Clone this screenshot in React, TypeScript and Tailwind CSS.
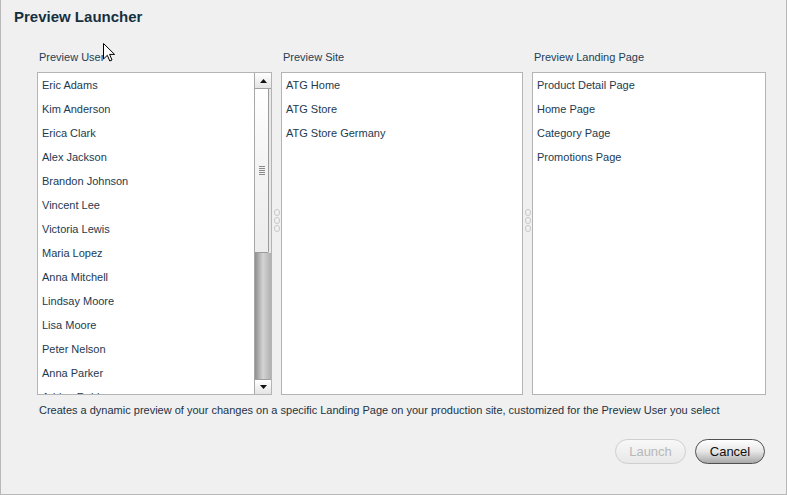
import React from 'react';

const users = [
  'Eric Adams',
  'Kim Anderson',
  'Erica Clark',
  'Alex Jackson',
  'Brandon Johnson',
  'Vincent Lee',
  'Victoria Lewis',
  'Maria Lopez',
  'Anna Mitchell',
  'Lindsay Moore',
  'Lisa Moore',
  'Peter Nelson',
  'Anna Parker',
  'Adrian Robinson',
];

const sites = ['ATG Home', 'ATG Store', 'ATG Store Germany'];

const pages = ['Product Detail Page', 'Home Page', 'Category Page', 'Promotions Page'];

function Items({ items }: { items: string[] }) {
  return (
    <ul className="pt-[4px]">
      {items.map((item) => (
        <li key={item} className="h-[24px] leading-[16px] pl-[4px] text-[11px] text-[#1d3a50] whitespace-nowrap">
          {item}
        </li>
      ))}
    </ul>
  );
}

function Splitter() {
  return (
    <div className="w-[9px] flex flex-col items-center justify-center gap-[1px] pt-[4px]">
      <span className="w-[6px] h-[7px] rounded-full border border-[#c8c8c8]" />
      <span className="w-[6px] h-[7px] rounded-full border border-[#c8c8c8]" />
      <span className="w-[6px] h-[7px] rounded-full border border-[#c8c8c8]" />
    </div>
  );
}

function Scrollbar() {
  return (
    <div className="w-[17px] flex flex-col border-l border-[#a8a8a8] bg-[#e8e8e8]">
      <div className="h-[16px] flex items-center justify-center bg-gradient-to-b from-white to-[#e4e4e4] border-b border-[#a0a0a0]">
        <svg width="7" height="4" viewBox="0 0 7 4"><path d="M3.5 0L7 4H0z" fill="#111" /></svg>
      </div>
      <div className="h-[164px] mr-[2px] flex items-center justify-center rounded-br-[2px] bg-gradient-to-b from-white via-[#f3f3f3] to-[#ececec] border-r border-b border-[#9a9a9a]">
        <div className="flex flex-col gap-[1px]">
          <span className="w-[6px] h-px bg-[#8a8a8a]" />
          <span className="w-[6px] h-px bg-[#8a8a8a]" />
          <span className="w-[6px] h-px bg-[#8a8a8a]" />
          <span className="w-[6px] h-px bg-[#8a8a8a]" />
          <span className="w-[6px] h-px bg-[#8a8a8a]" />
        </div>
      </div>
      <div className="flex-1 bg-gradient-to-r from-[#8f8f8f] via-[#d4d4d4] to-[#b0b0b0]" />
      <div className="h-[15px] flex items-center justify-center bg-gradient-to-b from-white to-[#e4e4e4] border-t border-[#a0a0a0]">
        <svg width="7" height="4" viewBox="0 0 7 4"><path d="M0 0H7L3.5 4z" fill="#111" /></svg>
      </div>
    </div>
  );
}

function Column({ label, width, children }: { label: string; width: string; children: React.ReactNode }) {
  return (
    <div className={`flex flex-col ${width}`}>
      <div className="h-[30px] pl-[2px] pt-[8px] text-[11px] leading-[14px] text-[#243e55]">{label}</div>
      <div className="h-[323px] flex border border-[#b4b4b4] bg-white overflow-hidden">{children}</div>
    </div>
  );
}

export default function App() {
  return (
    <div
      className="relative w-[787px] h-[495px] bg-[#f0f0f0] border-l border-r border-b border-[#b8b8b8] overflow-hidden"
      style={{ fontFamily: '"Liberation Sans", Arial, sans-serif' }}
    >
      <h1 className="pl-[13px] pt-[8px] h-[42px] text-[15px] leading-[18px] font-bold text-[#17303f]">Preview Launcher</h1>

      <div className="flex pl-[36px]">
        <Column label="Preview User" width="w-[235px]">
          <div className="flex-1 overflow-hidden">
            <Items items={users} />
          </div>
          <Scrollbar />
        </Column>
        <Splitter />
        <Column label="Preview Site" width="w-[242px]">
          <div className="flex-1">
            <Items items={sites} />
          </div>
        </Column>
        <Splitter />
        <Column label="Preview Landing Page" width="w-[234px]">
          <div className="flex-1">
            <Items items={pages} />
          </div>
        </Column>
      </div>

      <p className="pl-[38px] pt-[8px] text-[11px] leading-[14px] text-[#1d3243]">
        Creates a dynamic preview of your changes on a specific Landing Page on your production site, customized for the Preview User you select
      </p>

      <div className="flex justify-end gap-[9px] pr-[21px] pt-[22px]">
        <button className="w-[71px] h-[25px] rounded-full border border-[#cfcfcf] bg-gradient-to-b from-[#f8f8f8] to-[#e8e8e8] text-[13px] text-[#b8b8b8]">
          Launch
        </button>
        <button className="w-[70px] h-[25px] rounded-full border border-[#505050] bg-gradient-to-b from-white via-[#e6e6e6] to-[#a9a9a9] text-[13px] text-[#111]">
          Cancel
        </button>
      </div>

      <svg className="absolute left-[102px] top-[43px]" width="12" height="19" viewBox="0 0 12 19">
        <path d="M0.5 0.5V16L4.3 12.3L6.8 18L9 17L6.6 11.4H11.6Z" fill="#fff" stroke="#000" strokeWidth="1" />
      </svg>
    </div>
  );
}
